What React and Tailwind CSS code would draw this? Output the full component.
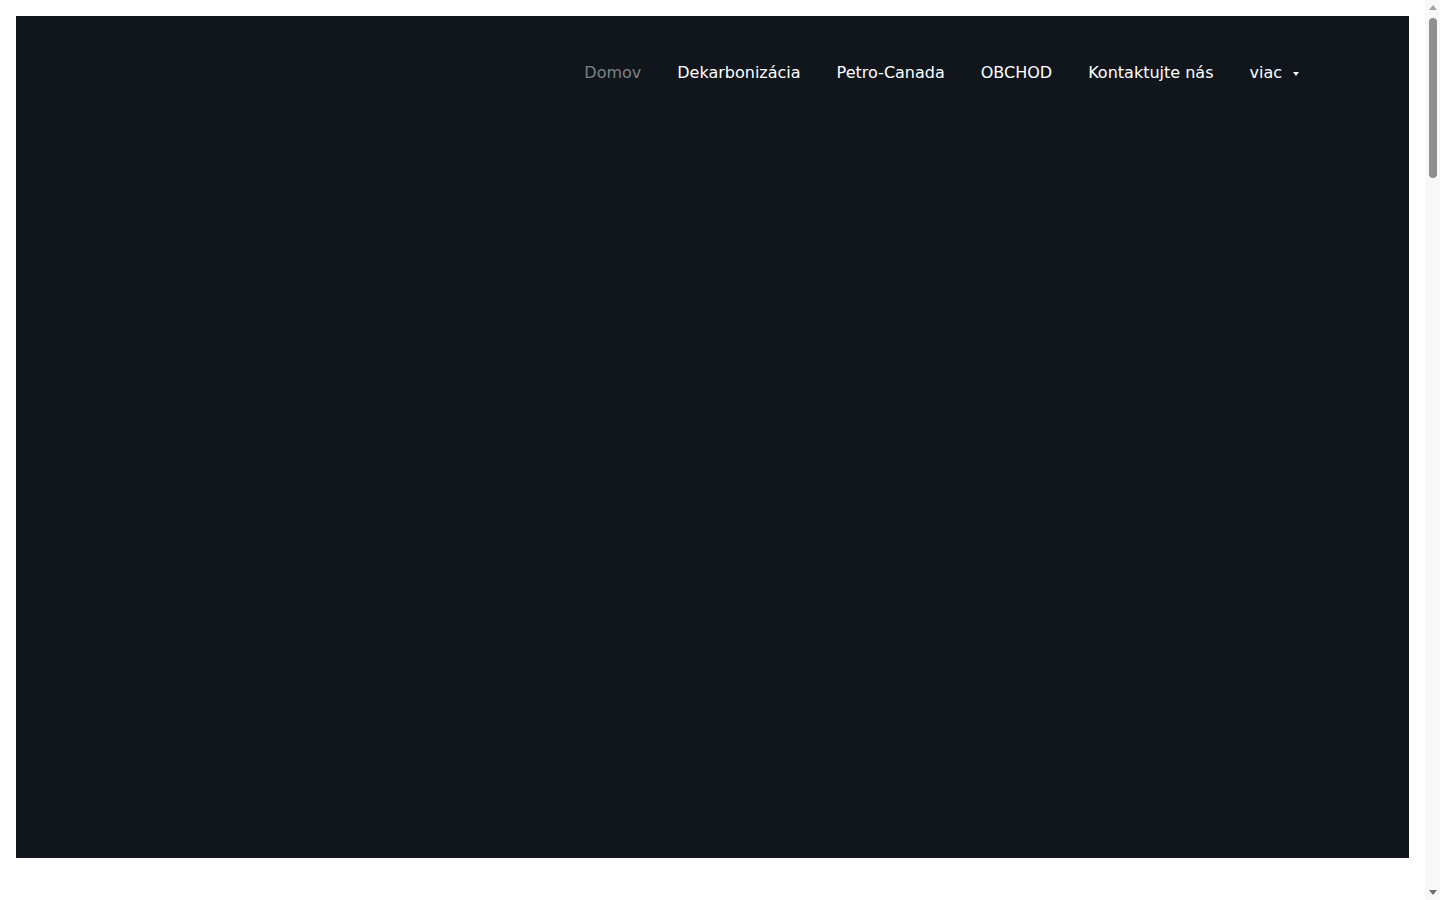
import React from "react";

export default function App() {
  const items = ["Dekarbonizácia", "Petro-Canada", "OBCHOD", "Kontaktujte nás"];
  return (
    <div className="flex h-[900px] w-[1440px] overflow-hidden bg-white" style={{ fontFamily: '"DejaVu Sans", sans-serif' }}>
      <div className="flex-1 p-4">
        <div className="bg-[#11161d] h-[842px] flex flex-col">
          <nav className="flex justify-end items-start pt-[45px] pr-[110px]">
            <ul className="flex items-center gap-[36px] text-[16px] leading-[24px] h-[24px]">
              <li className="text-[#7d8187]">Domov</li>
              {items.map((t) => (
                <li key={t} className="text-white">{t}</li>
              ))}
              <li className="text-white flex items-center gap-[11px]">
                viac
                <span className="block w-0 h-0 border-l-[3px] border-r-[3px] border-t-[4px] border-l-transparent border-r-transparent border-t-white mt-[1px]"></span>
              </li>
            </ul>
          </nav>
        </div>
      </div>
      <div className="w-[15px] h-full bg-[#f8f8f8] flex flex-col items-center">
        <div className="h-[15px] w-full flex items-center justify-center">
          <span className="block w-0 h-0 border-l-[4px] border-r-[4px] border-b-[5px] border-l-transparent border-r-transparent border-b-[#a3a3a3]"></span>
        </div>
        <div className="w-[8px] h-[160px] mt-[3px] rounded-full bg-[#8f8f8f]"></div>
        <div className="flex-1"></div>
        <div className="h-[15px] w-full flex items-center justify-center">
          <span className="block w-0 h-0 border-l-[4px] border-r-[4px] border-t-[5px] border-l-transparent border-r-transparent border-t-[#6e6e6e]"></span>
        </div>
      </div>
    </div>
  );
}
